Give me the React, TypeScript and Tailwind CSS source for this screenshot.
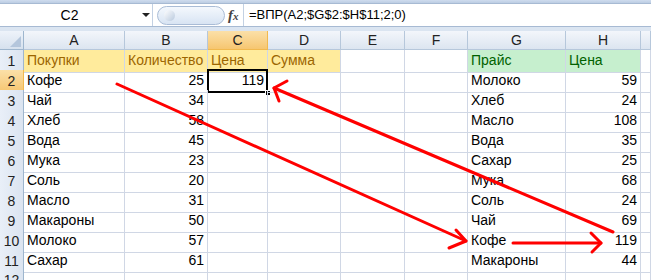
const font = { fontFamily: '"Liberation Sans", Arial, sans-serif' };

type Cell = { text?: string; num?: boolean; tone?: "neutral" | "good" };

const cols = ["A", "B", "C", "D", "E", "F", "G", "H", ""];

const left: [string, number][] = [
  ["Кофе", 25],
  ["Чай", 34],
  ["Хлеб", 58],
  ["Вода", 45],
  ["Мука", 23],
  ["Соль", 20],
  ["Масло", 31],
  ["Макароны", 50],
  ["Молоко", 57],
  ["Сахар", 61],
];

const price: [string, number][] = [
  ["Молоко", 59],
  ["Хлеб", 24],
  ["Масло", 108],
  ["Вода", 35],
  ["Сахар", 25],
  ["Мука", 68],
  ["Соль", 24],
  ["Чай", 69],
  ["Кофе", 119],
  ["Макароны", 44],
];

function buildRows(): Cell[][] {
  const rows: Cell[][] = [];
  rows.push([
    { text: "Покупки", tone: "neutral" },
    { text: "Количество", tone: "neutral" },
    { text: "Цена", tone: "neutral" },
    { text: "Сумма", tone: "neutral" },
    {},
    {},
    { text: "Прайс", tone: "good" },
    { text: "Цена", tone: "good" },
    {},
  ]);
  for (let i = 0; i < 10; i++) {
    rows.push([
      { text: left[i][0] },
      { text: String(left[i][1]), num: true },
      {},
      {},
      {},
      {},
      { text: price[i][0] },
      { text: String(price[i][1]), num: true },
      {},
    ]);
  }
  rows.push([{}, {}, {}, {}, {}, {}, {}, {}, {}]);
  return rows;
}

function FormulaBar() {
  return (
    <div className="flex h-[24px] border-y border-[#a7bad3] bg-white">
      <div className="relative flex w-[153px] items-center justify-center border-r border-[#c3d1e3] text-[14px] text-black">
        <span className="ml-[-13px]">C2</span>
        <span className="absolute right-[2px] top-[9px] h-0 w-0 border-x-[4px] border-t-[4px] border-x-transparent border-t-[#222]" />
      </div>
      <div className="flex w-[90px] items-center">
        <div className="ml-[4px] flex h-[19px] w-[68px] items-center rounded-full border border-[#a9bcd6] bg-gradient-to-b from-[#f4f8fd] to-[#d8e4f3]">
          <span className="ml-[6px] h-[11px] w-[11px] rounded-full bg-gradient-to-br from-white to-[#b9c9de]" />
        </div>
        <span
          className="ml-[3px] text-[15px] font-bold italic text-[#444]"
          style={{ fontFamily: '"Liberation Serif", serif' }}
        >
          f<span className="text-[11px]">x</span>
        </span>
      </div>
      <div className="flex flex-1 items-center border-l border-[#c3d1e3] pl-[5px] text-[13px] text-black">
        =ВПР(A2;$G$2:$H$11;2;0)
      </div>
    </div>
  );
}

function Arrows() {
  return (
    <svg
      className="pointer-events-none absolute left-0 top-0"
      width="651"
      height="250"
      viewBox="0 31 651 250"
    >
      <g stroke="#ff0000" strokeWidth="3" fill="none" strokeLinecap="round" strokeLinejoin="round">
        <line x1="117" y1="84" x2="466" y2="241" />
        <polyline points="456,230 466,241 449,248" />
        <line x1="613" y1="232" x2="274" y2="88" />
        <polyline points="287,81 274,88 279,101" />
        <line x1="513" y1="243" x2="601" y2="243" />
        <polyline points="591,233 601,243 592,252" />
      </g>
    </svg>
  );
}

export default function App() {
  const rows = buildRows();
  const widths = "grid-cols-[24px_101px_83px_60px_73px_64px_63px_98px_75px_1fr]";

  return (
    <div className="h-[280px] w-[651px] overflow-hidden bg-[#dbe5f1]" style={font}>
      <div className="h-[3px] bg-gradient-to-b from-[#cfdcee] to-[#bccde3]" />
      <FormulaBar />
      <div className="h-[4px] bg-[#dbe5f1]" />
      <div className="relative bg-white">
        <div className={`grid ${widths} grid-rows-[19px] text-[14px]`}>
          <div className="relative border-b border-r border-[#9eb6ce] bg-gradient-to-b from-[#eef3fa] to-[#d6e1ee]">
            <span className="absolute bottom-[2px] right-[2px] h-0 w-0 border-b-[11px] border-l-[11px] border-l-transparent border-b-[#b4c6dc]" />
          </div>
          {cols.map((c, i) => (
            <div
              key={i}
              className={
                c === "C"
                  ? "flex items-center justify-center border-b border-r border-[#f1b94f] bg-gradient-to-b from-[#fbe0a8] to-[#f6c670] text-[#222]"
                  : "flex items-center justify-center border-b border-r border-[#b6c7db] bg-gradient-to-b from-[#f3f6fb] to-[#dce5f0] text-[#222]"
              }
            >
              {c}
            </div>
          ))}
        </div>
        {rows.map((row, r) => (
          <div key={r} className={`grid ${widths} h-[20px] text-[14px]`}>
            <div
              className={
                r === 1
                  ? "flex items-center justify-center border-b border-r border-[#f1b94f] bg-gradient-to-b from-[#fbe0a8] to-[#f6c670] text-[#222]"
                  : "flex items-center justify-center border-b border-r border-[#9eb6ce] bg-gradient-to-r from-[#e9eff8] to-[#dbe4f0] text-[#222]"
              }
            >
              {r + 1}
            </div>
            {row.map((cell, c) => {
              const active = r === 1 && c === 2;
              const tone =
                cell.tone === "neutral"
                  ? "bg-[#ffeb9c] text-[#9c6500]"
                  : cell.tone === "good"
                  ? "bg-[#c6efce] text-[#006100]"
                  : "text-black";
              return (
                <div
                  key={c}
                  className={`relative flex items-end overflow-visible whitespace-nowrap border-b border-r border-[#d0d7e5] pb-[1px] ${tone} ${
                    cell.num ? "justify-end pr-[3px]" : "pl-[3px]"
                  }`}
                >
                  {cell.text}
                  {active && (
                    <>
                      <span className="absolute inset-[-1px] flex items-end justify-end border-[2.5px] border-black pr-[2px] text-black">
                        119
                      </span>
                      <span className="absolute bottom-[-4px] right-[-4px] h-[6px] w-[6px] border border-white bg-black" />
                    </>
                  )}
                </div>
              );
            })}
          </div>
        ))}
        <Arrows />
      </div>
    </div>
  );
}
